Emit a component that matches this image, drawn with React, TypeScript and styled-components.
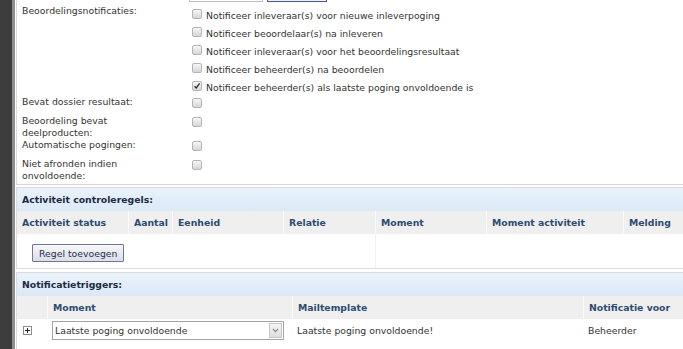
import React from "react";
import styled, { createGlobalStyle } from "styled-components";

const GlobalStyle = createGlobalStyle`
	html, body {
		margin: 0;
		padding: 0;
		background: #ffffff;
	}
	body {
		font-family: "DejaVu Sans", Verdana, sans-serif;
		font-size: 9.3px;
		color: #333333;
	}
`;

const notifications = [
	{ label: "Notificeer inleveraar(s) voor nieuwe inleverpoging", checked: false },
	{ label: "Notificeer beoordelaar(s) na inleveren", checked: false },
	{ label: "Notificeer inleveraar(s) voor het beoordelingsresultaat", checked: false },
	{ label: "Notificeer beheerder(s) na beoordelen", checked: false },
	{ label: "Notificeer beheerder(s) als laatste poging onvoldoende is", checked: true },
];

const flags = [
	"Bevat dossier resultaat:",
	"Beoordeling bevat deelproducten:",
	"Automatische pogingen:",
	"Niet afronden indien onvoldoende:",
];

const ruleColumns = [
	"Activiteit status",
	"Aantal",
	"Eenheid",
	"Relatie",
	"Moment",
	"Moment activiteit",
	"Melding",
];

const triggerColumns = ["", "Moment", "Mailtemplate", "Notificatie voor"];

const Check = ({ checked }: { checked?: boolean }) => (
	<Box>
		{checked && (
			<svg width="10" height="10" viewBox="0 0 10 10">
				<path d="M2 5.2 L4 7.6 L8.2 1.8" fill="none" stroke="#222" strokeWidth="1.6" />
			</svg>
		)}
	</Box>
);

export default function App() {
	return (
		<Page>
			<GlobalStyle />
			<Sidebar />
			<Rail />
			<Main>
				<FormPanel>
					<TopStub>
						<StubInput />
						<StubButton />
					</TopStub>
					<FormGrid>
						<Label>Beoordelingsnotificaties:</Label>
						<CheckList>
							{notifications.map((n) => (
								<CheckItem key={n.label}>
									<Check checked={n.checked} />
									<span>{n.label}</span>
								</CheckItem>
							))}
						</CheckList>
						{flags.map((f) => (
							<React.Fragment key={f}>
								<Label>{f}</Label>
								<FlagCell>
									<Check />
								</FlagCell>
							</React.Fragment>
						))}
					</FormGrid>
				</FormPanel>

				<Section>
					<SectionTitle>Activiteit controleregels:</SectionTitle>
					<HeadRow $cols="111px 44px 111px 92px 111px 137px 1fr">
						{ruleColumns.map((c) => (
							<HeadCell key={c}>{c}</HeadCell>
						))}
					</HeadRow>
					<BodyRow $cols="358px 1fr" $height={34}>
						<ButtonCell>
							<Button>Regel toevoegen</Button>
						</ButtonCell>
						<EmptyCell />
					</BodyRow>
				</Section>

				<Section $gap={3}>
					<SectionTitle>Notificatietriggers:</SectionTitle>
					<HeadRow $cols="30px 245px 291px 1fr">
						{triggerColumns.map((c, i) => (
							<HeadCell key={i}>{c}</HeadCell>
						))}
					</HeadRow>
					<BodyRow $cols="30px 245px 291px 1fr" $height={30}>
						<PlusCell>
							<svg width="9" height="9" viewBox="0 0 9 9">
								<rect x="0.5" y="0.5" width="8" height="8" fill="#fff" stroke="#8c8c8c" />
								<path d="M2 4.5 H7 M4.5 2 V7" stroke="#222" strokeWidth="1" />
							</svg>
						</PlusCell>
						<SelectCell>
							<Select>
								<span>Laatste poging onvoldoende</span>
								<SelectArrow>
									<svg width="7" height="5" viewBox="0 0 7 5">
										<path d="M1 1 L3.5 3.6 L6 1" fill="none" stroke="#8a8a8a" strokeWidth="1.2" />
									</svg>
								</SelectArrow>
							</Select>
						</SelectCell>
						<TextCell>Laatste poging onvoldoende!</TextCell>
						<TextCell>Beheerder</TextCell>
					</BodyRow>
				</Section>
			</Main>
		</Page>
	);
}

const Page = styled.div`
	display: flex;
	height: 349px;
	overflow: hidden;
`;

const Sidebar = styled.div`
	width: 12px;
	flex-shrink: 0;
	background: #3d3d3d;
`;

const Rail = styled.div`
	width: 3px;
	flex-shrink: 0;
	background: #8e8e8e;
`;

const Main = styled.div`
	flex: 1;
	padding-left: 1px;
	background: #ffffff;
	min-width: 0;
`;

const FormPanel = styled.div`
	border-left: 1px solid #dcdcdc;
	border-bottom: 1px solid #d6d6d6;
	padding: 0 0 2px 5px;
`;

const TopStub = styled.div`
	display: flex;
	align-items: flex-end;
	gap: 4px;
	height: 2px;
	padding-left: 167px;
`;

const StubInput = styled.div`
	width: 74px;
	height: 20px;
	flex-shrink: 0;
	box-sizing: border-box;
	border: 1px solid #bdbdbd;
`;

const StubButton = styled.div`
	width: 60px;
	height: 20px;
	flex-shrink: 0;
	box-sizing: border-box;
	border: 1px solid #4a5a8a;
	background: #eef0f6;
`;

const FormGrid = styled.div`
	display: grid;
	grid-template-columns: 170px 1fr;
	padding-top: 3px;
`;

const Label = styled.div`
	line-height: 12px;
	padding-right: 30px;
	color: #333;
`;

const CheckList = styled.div`
	display: flex;
	flex-direction: column;
	margin-top: 1px;
`;

const CheckItem = styled.div`
	display: flex;
	align-items: center;
	gap: 4px;
	height: 18px;
	white-space: nowrap;
	color: #333;
`;

const Box = styled.span`
	display: inline-flex;
	align-items: center;
	justify-content: center;
	width: 10px;
	height: 10px;
	box-sizing: border-box;
	border: 1px solid #b4b4b4;
	border-radius: 2px;
	background: linear-gradient(#f6f6f6, #d6d6d6);
	margin-bottom: 2px;
	flex-shrink: 0;
`;

const FlagCell = styled.div`
	padding: 2px 0 7px;
	height: 10px;
`;

const Section = styled.div<{ $gap?: number }>`
	margin-top: ${({ $gap }) => $gap ?? 2}px;
	border: 1px solid #dcdcdc;
	border-right: none;
`;

const SectionTitle = styled.div`
	height: 23px;
	line-height: 23px;
	padding-left: 5px;
	font-weight: bold;
	color: #1c2b40;
	background: linear-gradient(#eaf3fc, #dbe8f6);
`;

const HeadRow = styled.div<{ $cols: string }>`
	display: grid;
	grid-template-columns: ${({ $cols }) => $cols};
	height: 23px;
	background: #efefef;
`;

const HeadCell = styled.div`
	line-height: 23px;
	padding-left: 5px;
	font-weight: bold;
	color: #2e4c70;
	white-space: nowrap;
	overflow: hidden;

	& + & {
		border-left: 1px solid #fbfbfb;
	}
`;

const BodyRow = styled.div<{ $cols: string; $height: number }>`
	display: grid;
	grid-template-columns: ${({ $cols }) => $cols};
	height: ${({ $height }) => $height}px;
`;

const ButtonCell = styled.div`
	padding: 10px 0 0 15px;
`;

const EmptyCell = styled.div`
	border-left: 1px solid #f0f0f0;
`;

const Button = styled.button`
	height: 18px;
	padding: 0 6px;
	font-family: inherit;
	font-size: 9.3px;
	color: #22324f;
	border: 1px solid #6f7796;
	border-radius: 1px;
	background: linear-gradient(#f7f7fa, #dcdde6);
`;

const PlusCell = styled.div`
	display: flex;
	align-items: center;
	padding: 0 0 0 6px;
	height: 21px;
	margin-top: 1px;
`;

const SelectCell = styled.div`
	padding: 2px 0 0 5px;
`;

const Select = styled.div`
	display: flex;
	align-items: center;
	justify-content: space-between;
	width: 232px;
	height: 19px;
	box-sizing: border-box;
	border: 1px solid #a4a4a4;
	padding: 0 1px 0 2px;
	color: #333;
	background: #ffffff;
`;

const SelectArrow = styled.span`
	display: flex;
	align-items: center;
	justify-content: center;
	width: 13px;
	height: 15px;
	box-sizing: border-box;
	border: 1px solid #c6c6c6;
	background: linear-gradient(#f6f6f6, #dddddd);
`;

const TextCell = styled.div`
	padding: 2px 0 0 5px;
	line-height: 19px;
	color: #333;
	white-space: nowrap;
`;
